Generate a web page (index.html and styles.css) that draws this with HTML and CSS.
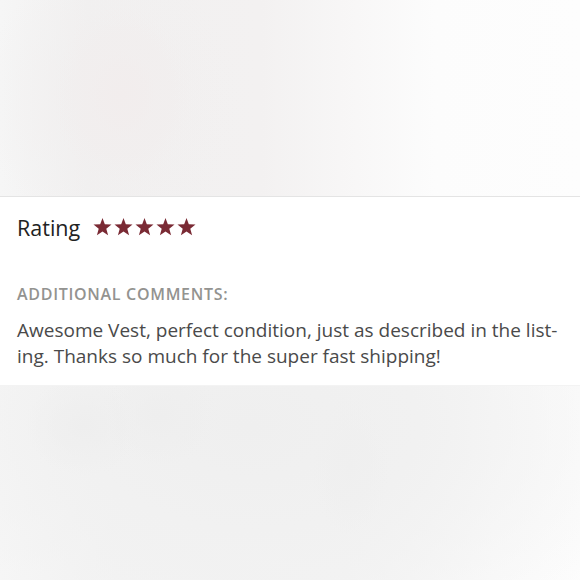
FILE: index.html
```html
<!DOCTYPE html>
<html>
<head>
<meta charset="utf-8">
<link rel="stylesheet" href="styles.css">
</head>
<body>
<div class="page">
  <div class="blur-top"></div>
  <section class="card">
    <div class="rating-row">
      <span class="rating-label">Rating</span>
      <span class="stars">
        <svg class="star" viewBox="0 0 20 19"><path d="M10 0l2.45 6.6 7.05.3-5.5 4.4 1.9 6.9L10 14.3l-5.9 3.9 1.9-6.9L.5 6.9l7.05-.3z"/></svg>
        <svg class="star" viewBox="0 0 20 19"><path d="M10 0l2.45 6.6 7.05.3-5.5 4.4 1.9 6.9L10 14.3l-5.9 3.9 1.9-6.9L.5 6.9l7.05-.3z"/></svg>
        <svg class="star" viewBox="0 0 20 19"><path d="M10 0l2.45 6.6 7.05.3-5.5 4.4 1.9 6.9L10 14.3l-5.9 3.9 1.9-6.9L.5 6.9l7.05-.3z"/></svg>
        <svg class="star" viewBox="0 0 20 19"><path d="M10 0l2.45 6.6 7.05.3-5.5 4.4 1.9 6.9L10 14.3l-5.9 3.9 1.9-6.9L.5 6.9l7.05-.3z"/></svg>
        <svg class="star" viewBox="0 0 20 19"><path d="M10 0l2.45 6.6 7.05.3-5.5 4.4 1.9 6.9L10 14.3l-5.9 3.9 1.9-6.9L.5 6.9l7.05-.3z"/></svg>
      </span>
    </div>
    <h3 class="comments-title">ADDITIONAL COMMENTS:</h3>
    <p class="comment">Awesome Vest, perfect condition, just as described in the list-<br>ing. Thanks so much for the super fast shipping!</p>
  </section>
  <div class="blur-bottom"></div>
</div>
</body>
</html>
```

FILE: styles.css
```css
html, body {
  margin: 0;
  padding: 0;
  background: #ffffff;
}
.page {
  width: 580px;
  height: 580px;
  overflow: hidden;
  display: flex;
  flex-direction: column;
  font-family: "Open Sans", "Lato", sans-serif;
}
.blur-top {
  height: 196px;
  flex: none;
  border-bottom: 1px solid #e4e4e4;
  background:
    radial-gradient(ellipse 70px 90px at 122px 95px, #f2eded 0%, rgba(242,237,237,0) 100%),
    radial-gradient(ellipse 130px 140px at 110px 100px, #f1efef 0%, rgba(241,239,239,0) 100%),
    linear-gradient(to right, #f6f6f6 0%, #f1f0f0 15%, #f3f1f1 45%, #fcfcfc 75%, #fdfdfd 100%);
}
.card {
  flex: none;
  background: #ffffff;
  padding: 13px 17px 18px;
  height: 188px;
  box-sizing: border-box;
}
.rating-row {
  display: flex;
  align-items: center;
  gap: 13px;
  height: 34px;
}
.rating-label {
  font-size: 21.5px;
  color: #222222;
}
.stars {
  display: flex;
  gap: 2px;
}
.star {
  width: 19px;
  height: 18px;
  fill: #7a2a34;
}
.comments-title {
  margin: 39px 0 0;
  font-size: 16px;
  font-weight: 600;
  color: #939390;
  letter-spacing: 0.7px;
}
.comment {
  margin: 12px 0 0;
  font-size: 19px;
  line-height: 26px;
  color: #4a4a4a;
}
.blur-bottom {
  flex: 1;
  border-top: 1px solid #f3f3f3;
  background:
    radial-gradient(ellipse 60px 50px at 85px 40px, #eeeeee 0%, rgba(238,238,238,0) 100%),
    radial-gradient(ellipse 60px 50px at 160px 30px, #eeeeee 0%, rgba(238,238,238,0) 100%),
    radial-gradient(ellipse 40px 70px at 350px 80px, #efefef 0%, rgba(239,239,239,0) 100%),
    radial-gradient(ellipse 420px 260px at 250px 40px, #efefef 0%, #f1f1f1 40%, rgba(246,246,246,0) 100%),
    linear-gradient(to right, #f8f8f8 0%, #f3f3f3 20%, #f4f4f4 60%, #fbfbfb 85%, #fdfdfd 100%);
}
```
